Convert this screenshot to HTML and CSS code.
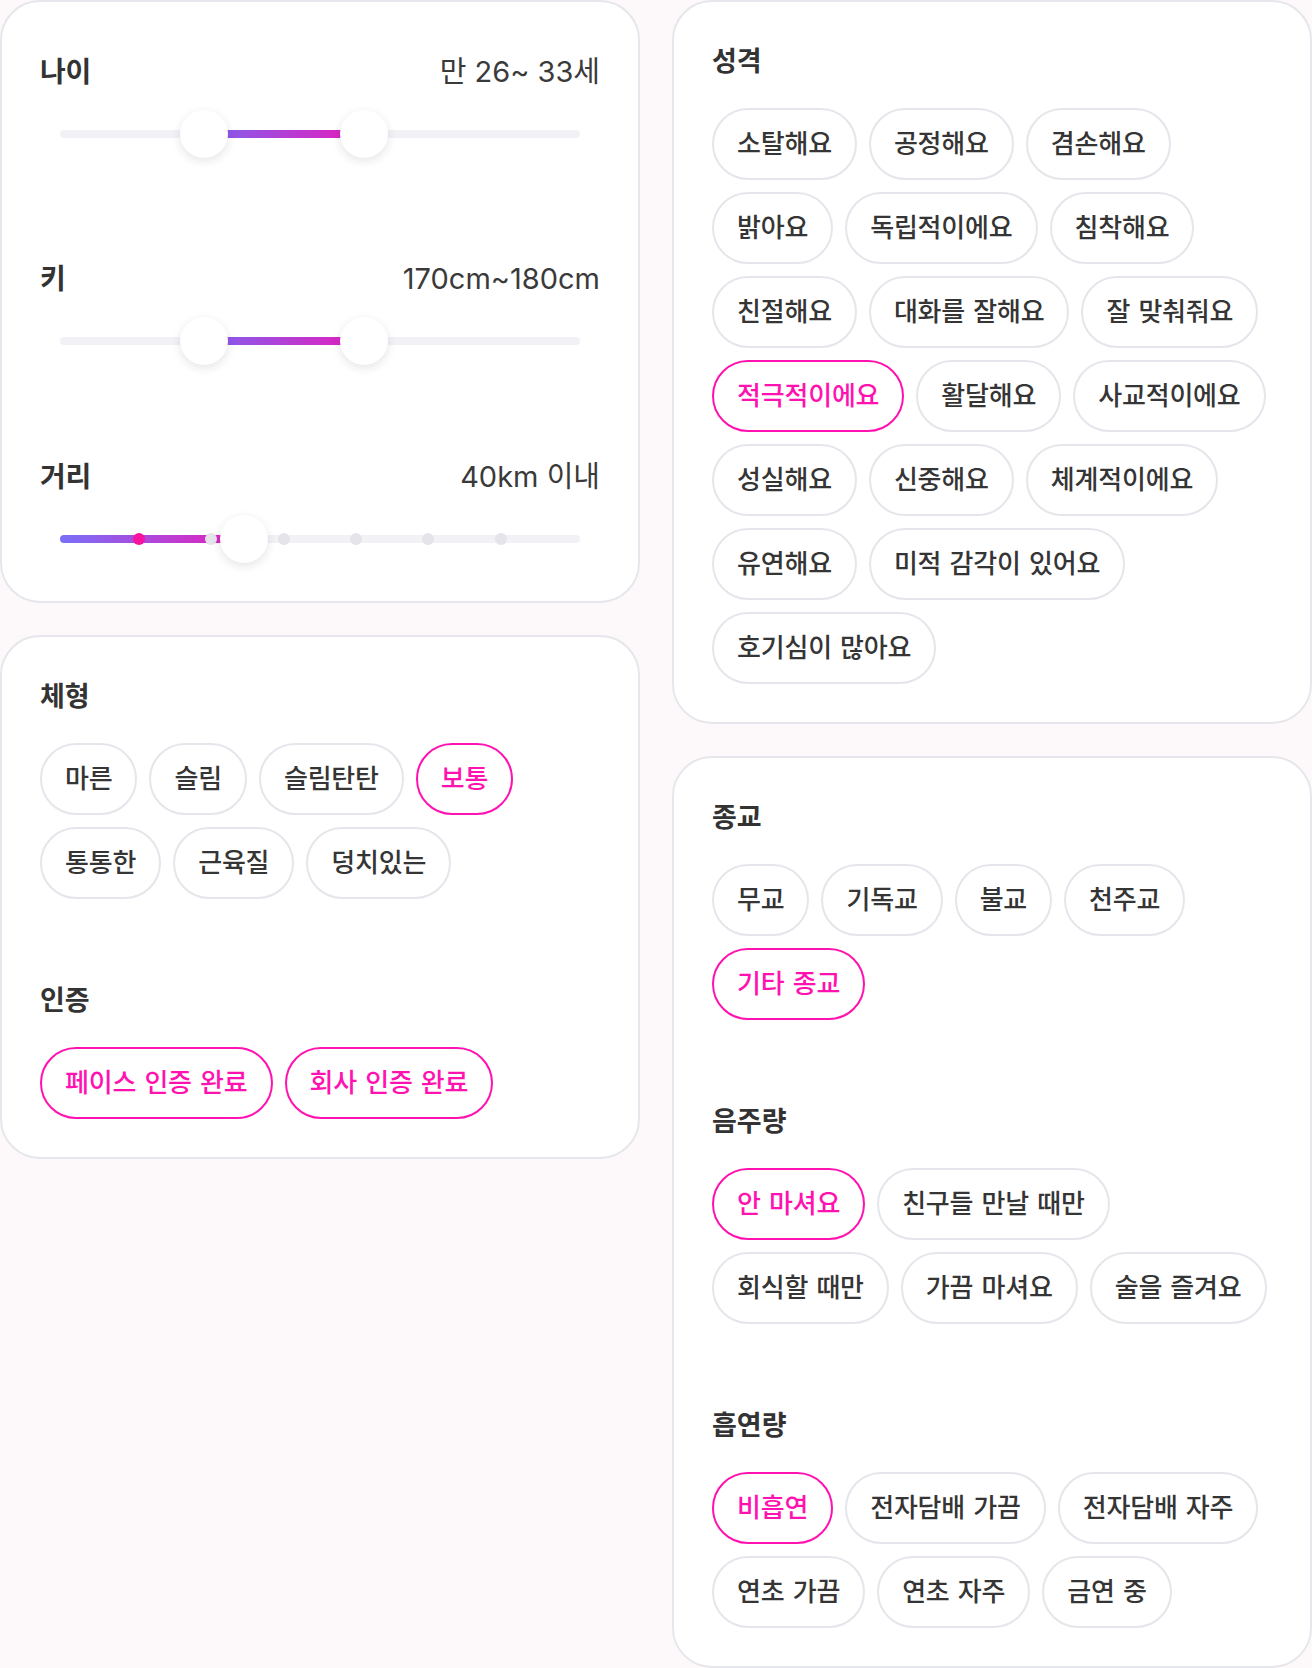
FILE: index.html
```html
<!DOCTYPE html>
<html lang="ko">
<head>
<meta charset="utf-8">
<title>필터</title>
<link rel="stylesheet" href="styles.css">
</head>
<body>
<div class="page">
  <div class="col">
    <section class="card">
      <div class="slider slider-first">
        <div class="slider-head"><h3 class="slider-title">나이</h3><span class="slider-value">만 26~ 33세</span></div>
        <div class="track-wrap">
          <div class="track">
            <div class="fill fill-range" style="left:27.7%;width:30.8%"></div>
            <span class="thumb" style="left:27.7%"></span>
            <span class="thumb" style="left:58.5%"></span>
          </div>
        </div>
      </div>
      <div class="slider slider-second">
        <div class="slider-head"><h3 class="slider-title">키</h3><span class="slider-value">170cm~180cm</span></div>
        <div class="track-wrap">
          <div class="track">
            <div class="fill fill-range" style="left:27.7%;width:30.8%"></div>
            <span class="thumb" style="left:27.7%"></span>
            <span class="thumb" style="left:58.5%"></span>
          </div>
        </div>
      </div>
      <div class="slider slider-third">
        <div class="slider-head"><h3 class="slider-title">거리</h3><span class="slider-value">40km 이내</span></div>
        <div class="track-wrap">
          <div class="track">
            <div class="fill fill-single" style="left:0;width:35.4%"></div>
            <span class="dot dot-on" style="left:15.2%"></span>
            <span class="dot" style="left:29.0%"></span>
            <span class="dot" style="left:43.1%"></span>
            <span class="dot" style="left:56.9%"></span>
            <span class="dot" style="left:70.8%"></span>
            <span class="dot" style="left:84.8%"></span>
            <span class="thumb" style="left:35.4%"></span>
          </div>
        </div>
      </div>
    </section>

    <section class="card">
      <div class="group">
        <h3 class="group-title">체형</h3>
        <div class="chips">
          <div class="chip-row">
            <span class="chip">마른</span>
            <span class="chip">슬림</span>
            <span class="chip">슬림탄탄</span>
            <span class="chip is-on">보통</span>
          </div>
          <div class="chip-row">
            <span class="chip">통통한</span>
            <span class="chip">근육질</span>
            <span class="chip">덩치있는</span>
          </div>
        </div>
      </div>
      <div class="group">
        <h3 class="group-title">인증</h3>
        <div class="chips">
          <div class="chip-row">
            <span class="chip is-on">페이스 인증 완료</span>
            <span class="chip is-on">회사 인증 완료</span>
          </div>
        </div>
      </div>
    </section>
  </div>

  <div class="col">
    <section class="card">
      <div class="group">
        <h3 class="group-title">성격</h3>
        <div class="chips">
          <div class="chip-row">
            <span class="chip">소탈해요</span>
            <span class="chip">공정해요</span>
            <span class="chip">겸손해요</span>
          </div>
          <div class="chip-row">
            <span class="chip">밝아요</span>
            <span class="chip">독립적이에요</span>
            <span class="chip">침착해요</span>
          </div>
          <div class="chip-row">
            <span class="chip">친절해요</span>
            <span class="chip">대화를 잘해요</span>
            <span class="chip">잘 맞춰줘요</span>
          </div>
          <div class="chip-row">
            <span class="chip is-on">적극적이에요</span>
            <span class="chip">활달해요</span>
            <span class="chip">사교적이에요</span>
          </div>
          <div class="chip-row">
            <span class="chip">성실해요</span>
            <span class="chip">신중해요</span>
            <span class="chip">체계적이에요</span>
          </div>
          <div class="chip-row">
            <span class="chip">유연해요</span>
            <span class="chip">미적 감각이 있어요</span>
          </div>
          <div class="chip-row">
            <span class="chip">호기심이 많아요</span>
          </div>
        </div>
      </div>
    </section>

    <section class="card">
      <div class="group">
        <h3 class="group-title">종교</h3>
        <div class="chips">
          <div class="chip-row">
            <span class="chip">무교</span>
            <span class="chip">기독교</span>
            <span class="chip">불교</span>
            <span class="chip">천주교</span>
          </div>
          <div class="chip-row">
            <span class="chip is-on">기타 종교</span>
          </div>
        </div>
      </div>
      <div class="group">
        <h3 class="group-title">음주량</h3>
        <div class="chips">
          <div class="chip-row">
            <span class="chip is-on">안 마셔요</span>
            <span class="chip">친구들 만날 때만</span>
          </div>
          <div class="chip-row">
            <span class="chip">회식할 때만</span>
            <span class="chip">가끔 마셔요</span>
            <span class="chip">술을 즐겨요</span>
          </div>
        </div>
      </div>
      <div class="group">
        <h3 class="group-title">흡연량</h3>
        <div class="chips">
          <div class="chip-row">
            <span class="chip is-on">비흡연</span>
            <span class="chip">전자담배 가끔</span>
            <span class="chip">전자담배 자주</span>
          </div>
          <div class="chip-row">
            <span class="chip">연초 가끔</span>
            <span class="chip">연초 자주</span>
            <span class="chip">금연 중</span>
          </div>
        </div>
      </div>
    </section>
  </div>
</div>
</body>
</html>
```

FILE: styles.css
```css
* {
  box-sizing: border-box;
}

html, body {
  margin: 0;
  padding: 0;
}

body {
  background: #fdf9fb;
  font-family: "Inter", "Noto Sans CJK KR", sans-serif;
  color: #363636;
}

.page {
  display: grid;
  grid-template-columns: 640px 640px;
  column-gap: 32px;
  align-items: start;
  width: 1312px;
}

.col {
  display: flex;
  flex-direction: column;
  gap: 32px;
}

.card {
  background: #ffffff;
  border: 2px solid #e6e6ed;
  border-radius: 40px;
  padding: 38px;
}

/* ---------- sliders ---------- */

.slider-first {
  margin-top: 12px;
}

.slider-second {
  margin-top: 101px;
}

.slider-third {
  margin-top: 92px;
}

.slider-head {
  display: flex;
  justify-content: space-between;
  align-items: center;
  height: 40px;
}

.slider-title {
  margin: 0;
  font-size: 28px;
  font-weight: 700;
  line-height: 40px;
  letter-spacing: -0.2px;
  color: #333333;
}

.slider-value {
  font-size: 29px;
  font-weight: 400;
  line-height: 40px;
  letter-spacing: 0;
  color: #3a3a3a;
}

.track-wrap {
  margin-top: 18px;
  height: 48px;
  padding: 0 20px;
  display: flex;
  align-items: center;
}

.track {
  position: relative;
  flex: 1;
  height: 8px;
  border-radius: 4px;
  background: #f1f1f6;
}

.fill {
  position: absolute;
  top: 0;
  height: 8px;
  border-radius: 4px;
}

.fill-range {
  background: linear-gradient(90deg, #7f62f0 0%, #e61cbb 100%);
}

.fill-single {
  background: linear-gradient(90deg, #786ff8 0%, #e81cba 100%);
}

.dot {
  position: absolute;
  top: 50%;
  width: 12px;
  height: 12px;
  margin: -6px 0 0 -6px;
  border-radius: 50%;
  background: #e4e4ea;
}

.dot-on {
  background: #f5149f;
}

.thumb {
  position: absolute;
  top: 50%;
  width: 48px;
  height: 48px;
  margin: -24px 0 0 -24px;
  border-radius: 50%;
  background: #ffffff;
  box-shadow: 0 3px 10px rgba(40, 30, 60, 0.12);
}

/* ---------- chip groups ---------- */

.group + .group {
  margin-top: 80px;
}

.group-title {
  margin: 0;
  height: 44px;
  font-size: 27px;
  font-weight: 700;
  line-height: 44px;
  letter-spacing: 0;
  color: #333333;
}

.chips {
  margin-top: 24px;
  display: flex;
  flex-direction: column;
  gap: 12px;
}

.chip-row {
  display: flex;
  gap: 12px;
}

.chip {
  display: inline-flex;
  align-items: center;
  height: 72px;
  padding: 0 23px;
  border: 2px solid #e5e5ec;
  border-radius: 36px;
  background: #ffffff;
  font-size: 26px;
  font-weight: 500;
  line-height: 1;
  letter-spacing: -0.2px;
  word-spacing: 1.5px;
  white-space: nowrap;
  color: #353535;
}

.chip.is-on {
  border-color: #ff12b0;
  color: #ff12b0;
}
```
